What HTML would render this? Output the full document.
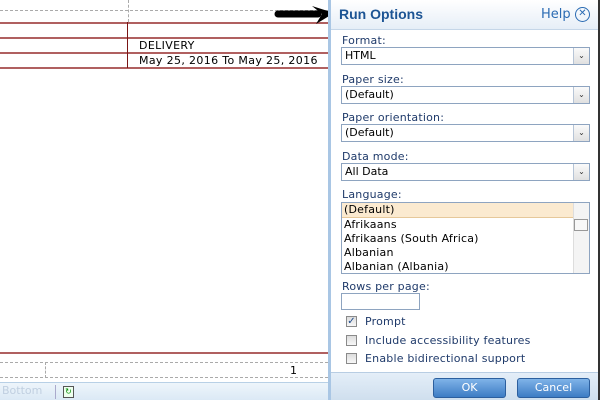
<!DOCTYPE html>
<html><head><style>
*{margin:0;padding:0;box-sizing:border-box}
body{width:600px;height:400px;overflow:hidden;background:#fff;font-family:"DejaVu Sans","Liberation Sans",sans-serif;position:relative}
.a{position:absolute}
.lbl{position:absolute;left:342px;font-size:11px;color:#1f3a6a;letter-spacing:.2px}
.sel{position:absolute;left:341px;width:249px;height:18px;border:1px solid #8ea4c0;background:#fff;font-size:11px;color:#000;padding:1px 3px;line-height:14px}
.sel .b{position:absolute;right:0;top:0;width:16px;height:16px;border-left:1px solid #b6c4d6;background:linear-gradient(#fafafa,#e0e0e0);font-size:8px;text-align:center;line-height:16px;color:#333}
.cb{position:absolute;left:346px;width:11px;height:11px;border:1px solid #8a8a8a;background:linear-gradient(#ddd,#f7f7f7)}
.ct{position:absolute;left:365px;font-size:11px;color:#1f3a6a;letter-spacing:.2px}
.btn{position:absolute;top:378px;height:20px;border:1px solid #2c5f9e;border-radius:3px;background:linear-gradient(#7fb3e8,#3d7cc4);color:#fff;font-size:11px;text-align:center;line-height:18px}
.red{position:absolute;left:0;width:328px;height:2px;background:#8e1d1d;opacity:.7}
</style></head><body>
<div class="a" style="left:0;top:10px;width:328px;border-top:1px dashed #aaa"></div>
<div class="a" style="left:128px;top:0;height:22px;border-left:1px dashed #aaa"></div>
<div class="red" style="top:22px"></div>
<div class="red" style="top:37px"></div>
<div class="red" style="top:52px"></div>
<div class="red" style="top:67px"></div>
<div class="a" style="left:127px;top:22px;width:1px;height:46px;background:#7a1515"></div>
<div class="a" style="left:139px;top:39px;font-size:11px;letter-spacing:.35px">DELIVERY</div>
<div class="a" style="left:139px;top:54px;font-size:11px;letter-spacing:.35px">May 25, 2016 To May 25, 2016</div>
<div class="red" style="top:352px"></div>
<div class="a" style="left:0;top:362px;width:328px;height:16px;border-top:1px dashed #aaa;border-bottom:1px dashed #aaa"></div>
<div class="a" style="left:45px;top:362px;height:16px;border-left:1px dashed #aaa"></div>
<div class="a" style="left:290px;top:364px;font-size:11px">1</div>
<div class="a" style="left:0;top:382px;width:330px;height:18px;background:linear-gradient(#eef5fb,#dbe9f5);border-top:1px solid #b8d0e6"></div>
<div class="a" style="left:2px;top:384px;font-size:11px;color:#c0cfe0">Bottom</div>
<div class="a" style="left:55px;top:385px;width:1px;height:14px;background:#aac"></div>
<div class="a" style="left:63px;top:386px;width:11px;height:12px;border:1px solid #555;background:#efe;font-size:8px;color:#080;text-align:center;line-height:10px">↻</div>
<svg class="a" style="left:270px;top:2px" width="66" height="26"><path d="M8 12 L48 12" stroke="#000" stroke-width="7" stroke-linecap="round"/><path d="M42 4 L64 11 L46 22 L52 12 Z" fill="#000"/></svg>
<div class="a" style="left:328px;top:0;width:272px;height:400px;border-left:3px solid #a9c6e4;border-right:2px solid #333;background:#fff"></div>
<div class="a" style="left:331px;top:0;width:267px;height:30px;background:linear-gradient(#fff,#e6eef7);border-bottom:1px solid #c5d6e8"></div>
<div class="a" style="left:339px;top:6px;font-size:14px;font-weight:bold;color:#1c5494;font-family:'Liberation Sans',sans-serif">Run Options</div>
<div class="a" style="left:541px;top:7px;font-size:13px;color:#2a6bb3">Help</div>
<div class="a" style="left:575px;top:7px;width:15px;height:15px;border:1.5px solid #2a6bb3;border-radius:50%;font-size:10px;line-height:12px;text-align:center;color:#2a6bb3;font-weight:bold">✕</div>
<div class="lbl" style="top:34px">Format:</div>
<div class="sel" style="top:47px">HTML<div class="b">⌄</div></div>
<div class="lbl" style="top:73px">Paper size:</div>
<div class="sel" style="top:86px">(Default)<div class="b">⌄</div></div>
<div class="lbl" style="top:111px">Paper orientation:</div>
<div class="sel" style="top:124px">(Default)<div class="b">⌄</div></div>
<div class="lbl" style="top:150px">Data mode:</div>
<div class="sel" style="top:163px">All Data<div class="b">⌄</div></div>
<div class="lbl" style="top:188px">Language:</div>
<div class="a" style="left:341px;top:202px;width:249px;height:72px;border:1px solid #8ea4c0;font-size:11px;line-height:14px;letter-spacing:.2px">
<div style="background:#fbead0;border-bottom:1px solid #e6c89a;padding-left:2px;width:231px">(Default)</div>
<div style="padding-left:2px">Afrikaans</div>
<div style="padding-left:2px">Afrikaans (South Africa)</div>
<div style="padding-left:2px">Albanian</div>
<div style="padding-left:2px">Albanian (Albania)</div>
<div class="a" style="right:0;top:0;width:16px;height:70px;background:#f4f4f4;border-left:1px solid #ddd"></div>
<div class="a" style="right:1px;top:16px;width:14px;height:12px;border:1px solid #999;background:#f8f8f8"></div>
</div>
<div class="lbl" style="top:280px">Rows per page:</div>
<div class="a" style="left:341px;top:293px;width:79px;height:17px;border:1px solid #8ea4c0"></div>
<div class="cb" style="top:316px;font-size:10px;line-height:9px;color:#1c4a8a;text-align:center">✓</div>
<div class="ct" style="top:315px">Prompt</div>
<div class="cb" style="top:335px"></div>
<div class="ct" style="top:334px">Include accessibility features</div>
<div class="cb" style="top:353px"></div>
<div class="ct" style="top:352px">Enable bidirectional support</div>
<div class="a" style="left:331px;top:372px;width:267px;height:28px;background:linear-gradient(#e4eef8,#cfdfee);border-top:1px solid #b8cde3"></div>
<div class="btn" style="left:433px;width:73px">OK</div>
<div class="btn" style="left:517px;width:73px">Cancel</div>
</body></html>
